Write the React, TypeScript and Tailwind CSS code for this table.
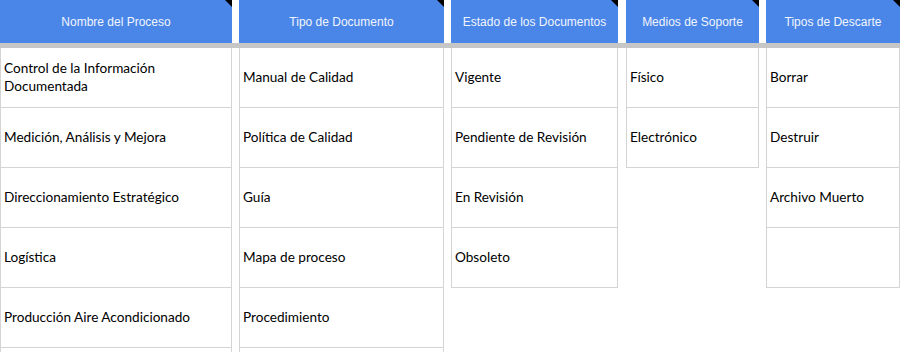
const columns = [
  {
    title: "Nombre del Proceso",
    width: "w-[232px]",
    items: [
      "Control de la Información Documentada",
      "Medición, Análisis y Mejora",
      "Direccionamiento Estratégico",
      "Logística",
      "Producción Aire Acondicionado",
      "",
    ],
  },
  {
    title: "Tipo de Documento",
    width: "w-[205px] ml-[7px]",
    items: ["Manual de Calidad", "Política de Calidad", "Guía", "Mapa de proceso", "Procedimiento", ""],
  },
  {
    title: "Estado de los Documentos",
    width: "w-[167px] ml-[7px]",
    items: ["Vigente", "Pendiente de Revisión", "En Revisión", "Obsoleto"],
  },
  {
    title: "Medios de Soporte",
    width: "w-[133px] ml-[8px]",
    items: ["Físico", "Electrónico"],
  },
  {
    title: "Tipos de Descarte",
    width: "w-[134px] ml-[7px]",
    items: ["Borrar", "Destruir", "Archivo Muerto", ""],
  },
]

const App = () => {
  return (
    <div className="w-[904px] h-[352px] overflow-hidden bg-white">
      {/* header row */}
      <div className="flex">
        {columns.map((col) => (
          <div
            key={col.title}
            className={`${col.width} relative h-[43px] bg-[#4a86e8] flex items-center justify-center font-['Liberation_Sans',Arial,sans-serif] text-[12px] text-[#f1f5fd]`}
          >
            {col.title}
            <div className="absolute top-0 right-0 w-0 h-0 border-l-[7px] border-l-transparent border-t-[7px] border-t-black" />
          </div>
        ))}
      </div>
      <div className="w-[900px] h-[5px] bg-[#c6c6c6]" />
      {/* body */}
      <div className="flex items-start">
        {columns.map((col) => (
          <div key={col.title} className={`${col.width} flex flex-col border-x border-[#d4d4d4]`}>
            {col.items.map((item, i) => (
              <div
                key={i}
                className="h-[60px] flex items-center px-[3px] pb-[2px] border-b border-[#d4d4d4] font-['Lato',sans-serif] text-[13.6px] leading-[18px] text-black"
              >
                {item}
              </div>
            ))}
          </div>
        ))}
      </div>
    </div>
  )
}

export default App
